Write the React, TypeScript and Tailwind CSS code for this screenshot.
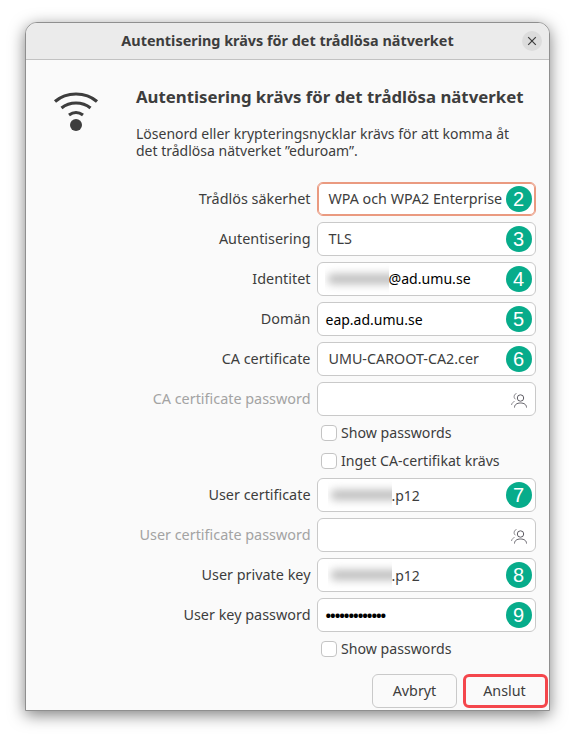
import type { ReactNode } from "react";

const font = { fontFamily: '"Noto Sans", sans-serif' };

function PersonIcon() {
    return (
        <svg width="17" height="16" viewBox="0 0 17 16" fill="none" stroke="#5e5c64" strokeWidth="1" className="absolute right-[7px] top-[9px]">
            <circle cx="9.500" cy="6" r="3.200" />
            <path d="M3.500 15.500c0-3 2.500-4.500 6-4.500s6 1.500 6 4.500" />
            <path d="M5.500 1.500a3.200 3.200 0 0 0-1 5.800M3.500 9.500C2 10 .8 11 .5 13" stroke="#8f8e93" />
        </svg>
    );
}

function Badge({ n }: { n: number }) {
    return (
        <span
            className="absolute right-[3px] top-[3px] flex h-[26px] w-[26px] items-center justify-center rounded-full bg-[#07ac8b] text-[20px] leading-none text-white"
            style={{ fontFamily: '"Liberation Sans", sans-serif' }}
        >
            {n}
        </span>
    );
}

function Blurred() {
    return (
        <span className="inline-flex h-[30px] w-[64px] items-center overflow-hidden bg-white">
            <span className="ml-[3px] h-[10px] w-[70px] shrink-0 rounded-sm bg-[#bcbcbc] blur-[4px]" />
        </span>
    );
}

function Row({ label, muted, focused, children }: { label: string; muted?: boolean; focused?: boolean; children?: ReactNode }) {
    return (
        <div className="flex h-[34px] items-center">
            <span className={`w-[284.500px] pb-[1px] text-right text-[14.400px] ${muted ? "text-[#a3a3a3]" : "text-[#3d3d3d]"}`}>{label}</span>
            <div
                className={`relative ml-[6px] flex h-[34px] w-[219px] items-center rounded-[6px] border bg-white text-[14px] ${
                    focused ? "border-[#ea9a80] ring-1 ring-inset ring-[#ea9a80]" : "border-[#c9c9c9]"
                }`}
            >
                {children}
            </div>
        </div>
    );
}

function Check({ label, className }: { label: string; className?: string }) {
    return (
        <div className={`flex h-[18px] items-center pl-[295px] text-[14.150px] text-[#3d3d3d] ${className ?? ""}`}>
            <span className="h-[16px] w-[16px] rounded-[4px] border border-[#c4c4c4] bg-white" />
            <span className="ml-[4px]">{label}</span>
        </div>
    );
}

export default function App() {
    return (
        <div className="h-[739px] w-[576px] overflow-hidden bg-white pl-[25px] pt-[22px]" style={font}>
            <div className="flex h-[689px] w-[525px] flex-col overflow-hidden rounded-t-[12px] border border-[#8f8f8f] bg-[#fafafa] shadow-[0_4px_16px_rgba(0,0,0,0.5)]">
                <header className="relative flex h-[37px] shrink-0 items-center justify-center border-b border-[#c2c2c2] bg-[#ebebeb] text-[14.400px] font-bold text-[#3d3d3d]">
                    Autentisering krävs för det trådlösa nätverket
                    <span className="absolute right-[7px] top-[8px] flex h-[20px] w-[20px] items-center justify-center rounded-full bg-[#dcdcdc]">
                        <svg width="10" height="10" viewBox="0 0 10 10" stroke="#3d3d3d" strokeWidth="1.2">
                            <path d="M1.200 1.200l7.600 7.600M8.800 1.200l-7.600 7.600" />
                        </svg>
                    </span>
                </header>

                <div className="flex h-[122px] shrink-0 pt-[25px]">
                    <svg width="46" height="46" viewBox="0 0 46 46" fill="none" stroke="#3d3d3d" strokeWidth="3.200" className="ml-[27px] mt-[3.500px] shrink-0">
                        <path d="M2 12.500c6-5.200 13-7.500 21-7.500s15 2.300 21 7.500" />
                        <path d="M8.500 19c4.500-3.600 9-5 14.500-5s10 1.400 14.500 5" />
                        <path d="M16 26c2.200-1.600 4.500-2.500 7-2.500s4.800.9 7 2.500" />
                        <circle cx="23" cy="36" r="6" fill="#3d3d3d" stroke="none" />
                    </svg>
                    <div className="ml-[37px] text-[#3d3d3d]">
                        <h1 className="text-[16.800px] font-bold leading-[24px]">Autentisering krävs för det trådlösa nätverket</h1>
                        <p className="mt-[15.500px] w-[380px] text-[14px] leading-[17px]">
                            Lösenord eller krypteringsnycklar krävs för att komma åt
                            <br />
                            det trådlösa nätverket ”eduroam”.
                        </p>
                    </div>
                </div>

                <div className="flex flex-col gap-[6px]">
                    <Row label="Trådlös säkerhet" focused>
                        <span className="pl-[11px] text-[14.300px] text-[#3d3d3d]">WPA och WPA2 Enterprise</span>
                        <Badge n={2} />
                    </Row>
                    <Row label="Autentisering">
                        <span className="pl-[11px] text-[14.400px] text-[#3d3d3d]">TLS</span>
                        <Badge n={3} />
                    </Row>
                    <Row label="Identitet">
                        <span className="flex items-center pl-[7px] text-[14.100px] text-black">
                            <Blurred />@ad.umu.se
                        </span>
                        <Badge n={4} />
                    </Row>
                    <Row label="Domän">
                        <span className="pl-[8px] text-black">eap.ad.umu.se</span>
                        <Badge n={5} />
                    </Row>
                    <Row label="CA certificate">
                        <span className="pl-[11px] text-[14.300px] text-[#3d3d3d]">UMU-CAROOT-CA2.cer</span>
                        <Badge n={6} />
                    </Row>
                    <Row label="CA certificate password" muted>
                        <PersonIcon />
                    </Row>
                </div>

                <Check label="Show passwords" className="mt-[8px]" />
                <Check label="Inget CA-certifikat krävs" className="mt-[10px]" />

                <div className="mt-[8px] flex flex-col gap-[6px]">
                    <Row label="User certificate">
                        <span className="flex items-center pl-[10px] text-[#3d3d3d]">
                            <Blurred />.p12
                        </span>
                        <Badge n={7} />
                    </Row>
                    <Row label="User certificate password" muted>
                        <PersonIcon />
                    </Row>
                    <Row label="User private key">
                        <span className="flex items-center pl-[10px] text-[#3d3d3d]">
                            <Blurred />.p12
                        </span>
                        <Badge n={8} />
                    </Row>
                    <Row label="User key password">
                        <span className="pl-[8px] text-[15px] font-bold tracking-[-1.050px] text-black">•••••••••••••</span>
                        <Badge n={9} />
                    </Row>
                </div>

                <Check label="Show passwords" className="mt-[8px]" />

                <div className="mt-[16px] flex justify-end gap-[6px] pr-[1px] text-[14.300px] text-[#3d3d3d]">
                    <button type="button" className="h-[34px] w-[85px] rounded-[6px] border border-[#c9c9c9] bg-[#fafafa]">
                        Avbryt
                    </button>
                    <button type="button" className="h-[34px] w-[85px] rounded-[6px] border-[3px] border-[#f4464c] bg-[#fafafa] pr-[2px]">
                        Anslut
                    </button>
                </div>
            </div>
        </div>
    );
}
